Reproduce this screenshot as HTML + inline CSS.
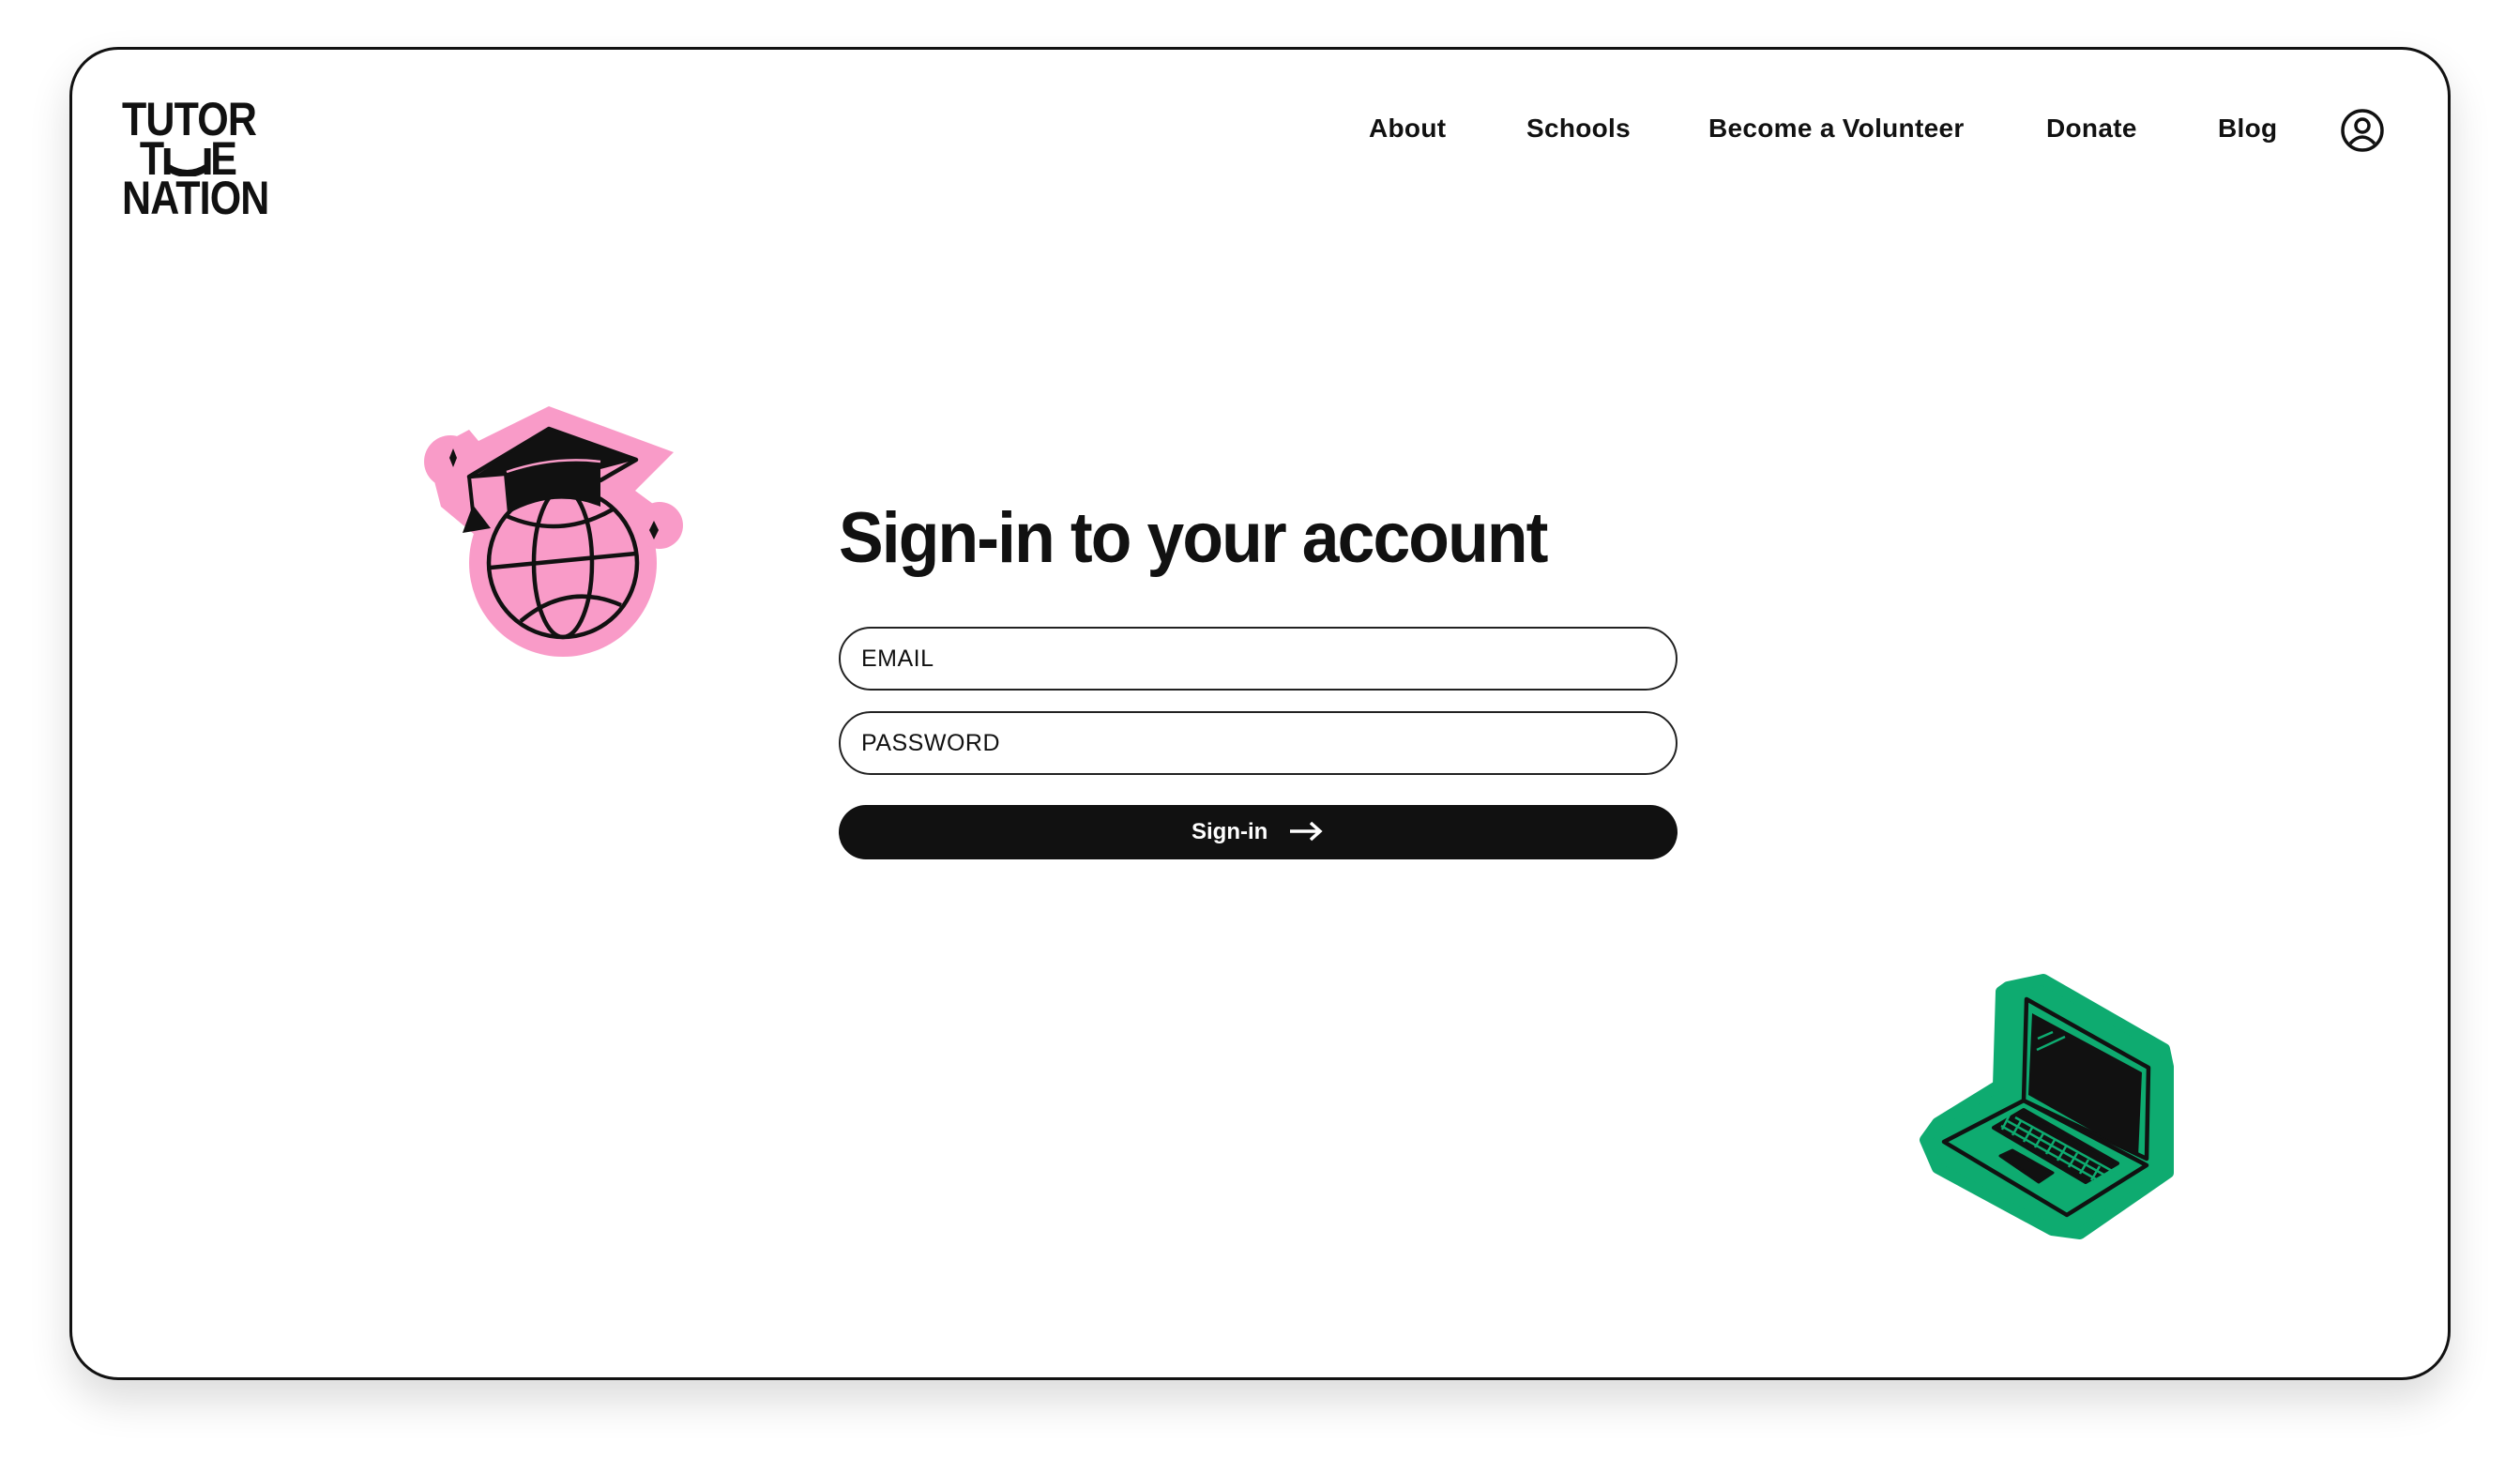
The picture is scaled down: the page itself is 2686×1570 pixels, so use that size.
<!DOCTYPE html>
<html><head><meta charset="utf-8"><style>
*{margin:0;padding:0;box-sizing:border-box}
body{width:2686px;height:1570px;background:#fff;position:relative;overflow:hidden;font-family:"Liberation Sans",sans-serif;color:#111}
.card{position:absolute;left:74px;top:50px;width:2538px;height:1421px;border:3px solid #111;border-radius:52px;background:#fff;box-shadow:0 22px 44px rgba(0,0,0,.14)}
.logo{position:absolute;left:130px;top:106px;font-weight:bold;font-size:50px;line-height:42px;letter-spacing:-1px;transform:scaleX(.86);transform-origin:left top}
.nav{position:absolute;top:121px;font-size:28px;font-weight:bold;letter-spacing:.3px}
h1{position:absolute;left:894px;top:530px;font-size:76px;font-weight:bold;letter-spacing:-2px;transform:scaleX(.94);transform-origin:left top;white-space:nowrap}
.inp{position:absolute;left:894px;width:894px;height:68px;border:2px solid #222;border-radius:34px;font-size:25px;padding-left:22px;line-height:64px;letter-spacing:.5px}
.btn{position:absolute;left:894px;top:858px;width:894px;height:58px;background:#111;border-radius:29px;color:#fff;font-size:24px;font-weight:bold;text-align:center;line-height:58px}
</style></head><body>
<div class="card"></div>
<div class="logo">TUTOR<br><span style="margin-left:22px">T</span><svg width="58" height="32" viewBox="0 0 58 32" style="vertical-align:-2px"><path d="M4 2 V30 M4 22 Q29 36 54 22 M54 2 V30" stroke="#111" stroke-width="8" fill="none"/></svg>E<br>NATION</div>
<div class="nav" style="left:1459px">About</div>
<div class="nav" style="left:1627px">Schools</div>
<div class="nav" style="left:1821px">Become a Volunteer</div>
<div class="nav" style="left:2181px">Donate</div>
<div class="nav" style="left:2364px">Blog</div>
<svg style="position:absolute;left:2494px;top:115px" width="48" height="48" viewBox="0 0 48 48"><circle cx="24" cy="24" r="21" fill="none" stroke="#111" stroke-width="3.5"/><circle cx="24" cy="19" r="7" fill="none" stroke="#111" stroke-width="3.5"/><path d="M11 38 Q24 24 37 38" fill="none" stroke="#111" stroke-width="3.5"/></svg>

<svg style="position:absolute;left:440px;top:420px" width="300" height="300" viewBox="0 0 300 300">
<g fill="#f99bc8"><circle cx="160" cy="180" r="100"/><circle cx="40" cy="72" r="28"/><circle cx="263" cy="140" r="25"/>
<polygon points="15,62 60,38 70,50 145,13 278,62 237,103 260,120 240,160 90,170 30,120"/></g>
<g fill="none" stroke="#111" stroke-width="4.5">
<circle cx="160" cy="180" r="79"/><ellipse cx="160" cy="180" rx="31" ry="79"/>
<path d="M83 185 L238 170"/><path d="M115 242 Q165 200 222 225"/><path d="M100 130 Q157 155 213 123"/>
<polygon points="60,88 145,37 238,70 200,92 150,78 97,85" stroke-linejoin="round"/></g>
<path d="M97 85 Q150 68 200 75 L200 120 Q150 100 101 128 Z" fill="#111"/>
<path d="M145 37 L238 70 L200 80 Q150 68 97 85 L62 90 Z" fill="#111"/>
<path d="M100 83 Q150 66 200 72" stroke="#f99bc8" stroke-width="2.5" fill="none"/>
<path d="M60 88 L64 125" stroke="#111" stroke-width="4"/>
<polygon points="53,148 64,118 83,143" fill="#111"/>
<path d="M43 58 L47 68 L43 78 L39 68Z M257 135 L262 145 L257 155 L252 145Z" fill="#111"/>
</svg>

<svg style="position:absolute;left:2030px;top:1030px" width="300" height="300" viewBox="0 0 300 300">
<polygon points="110,22 148,14 277,88 281,107 281,220 187,285 157,281 35,215 22,185 35,167 100,127 103,27" fill="#0eab70" stroke="#0eab70" stroke-width="12" stroke-linejoin="round"/>
<g fill="none" stroke="#111" stroke-width="4.5" stroke-linejoin="round">
<polygon points="130,35 260,108 258,205 127,143"/><polygon points="127,143 42,187 173,265 258,212"/></g>
<polygon points="136,50 253,113 249,203 132,137" fill="#111"/>
<path d="M142 77 L158 70 M141 89 L171 75" stroke="#0eab70" stroke-width="2.5"/>
<polygon points="95,172 127,153 227,210 193,230" fill="#111" stroke="#111" stroke-width="4" stroke-linejoin="round"/>
<g stroke="#0eab70" stroke-width="2.5">
<path d="M103 170 L208 229 M110 165 L216 224 M118 161 L223 219"/>
<path d="M112 158 L104 174 M124 165 L115 180 M136 172 L127 187 M148 178 L139 193 M160 185 L151 200 M172 192 L163 207 M184 199 L175 214 M196 206 L187 221 M208 213 L199 228"/></g>
<polygon points="102,202 115,196 158,220 143,230" fill="#111" stroke="#111" stroke-width="3" stroke-linejoin="round"/>
</svg>

<h1>Sign-in to your account</h1>
<div class="inp" style="top:668px">EMAIL</div>
<div class="inp" style="top:758px">PASSWORD</div>
<div class="btn">Sign-in <svg width="40" height="24" viewBox="0 0 40 24" style="vertical-align:-4px;margin-left:14px"><path d="M3 12 H35 M25 3 L35 12 L25 21" stroke="#fff" stroke-width="3.5" fill="none"/></svg></div>
</body></html>
